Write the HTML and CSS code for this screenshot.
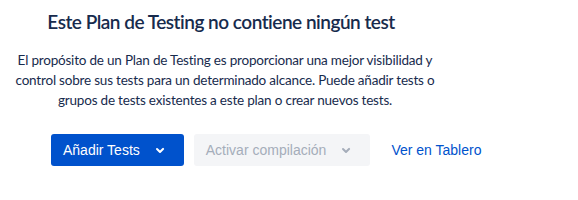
FILE: index.html
```html
<!DOCTYPE html>
<html lang="es">
<head>
<meta charset="utf-8">
<link rel="stylesheet" href="styles.css">
</head>
<body>
<div class="empty">
  <h2 class="title">Este Plan de Testing no contiene ningún test</h2>
  <p class="desc">El propósito de un Plan de Testing es proporcionar una mejor visibilidad y<br>control sobre sus tests para un determinado alcance. Puede añadir tests o<br>grupos de tests existentes a este plan o crear nuevos tests.</p>
  <div class="actions">
    <button class="btn btn-primary">Añadir Tests<span class="icon"><svg width="24" height="24" viewBox="0 0 24 24"><path d="M8.3 10.3a1 1 0 0 1 1.4 0L12 12.6l2.3-2.3a1 1 0 1 1 1.4 1.4l-3 3a1 1 0 0 1-1.4 0l-3-3a1 1 0 0 1 0-1.4z" fill="currentColor"/></svg></span></button>
    <button class="btn btn-disabled">Activar compilación<span class="icon"><svg width="24" height="24" viewBox="0 0 24 24"><path d="M8.3 10.3a1 1 0 0 1 1.4 0L12 12.6l2.3-2.3a1 1 0 1 1 1.4 1.4l-3 3a1 1 0 0 1-1.4 0l-3-3a1 1 0 0 1 0-1.4z" fill="currentColor"/></svg></span></button>
    <button class="btn btn-link">Ver en Tablero</button>
  </div>
</div>
</body>
</html>
```
FILE: styles.css
```css
html, body {
  margin: 0;
  padding: 0;
  background: #ffffff;
}
.empty {
  width: 450px;
  padding-top: 10px;
  color: #172B4D;
  font-family: Lato, "Noto Sans", sans-serif;
}
.title {
  margin: 0;
  padding-right: 8px;
  text-align: center;
  font-size: 19px;
  font-weight: 600;
  line-height: 24px;
  letter-spacing: -0.5px;
}
.desc {
  margin: 16px 0 0;
  text-align: center;
  font-size: 13.5px;
  letter-spacing: -0.2px;
  line-height: 20px;
  white-space: nowrap;
}
.actions {
  display: flex;
  gap: 10px;
  margin-top: 24px;
  padding-left: 51px;
}
.btn {
  display: inline-flex;
  align-items: center;
  height: 32px;
  padding: 0 12px;
  border: 0;
  border-radius: 3px;
  font-family: "Liberation Sans", Arial, sans-serif;
  font-size: 14px;
  cursor: pointer;
  white-space: nowrap;
}
.btn .icon {
  display: inline-flex;
  width: 24px;
  height: 24px;
  margin-left: 8px;
}
.btn-primary {
  background: #0052CC;
  color: #ffffff;
}
.btn-disabled {
  background: #F4F5F7;
  color: #A5ADBA;
}
.btn-link {
  background: transparent;
  color: #0052CC;
  padding: 0 11px;
}
```
